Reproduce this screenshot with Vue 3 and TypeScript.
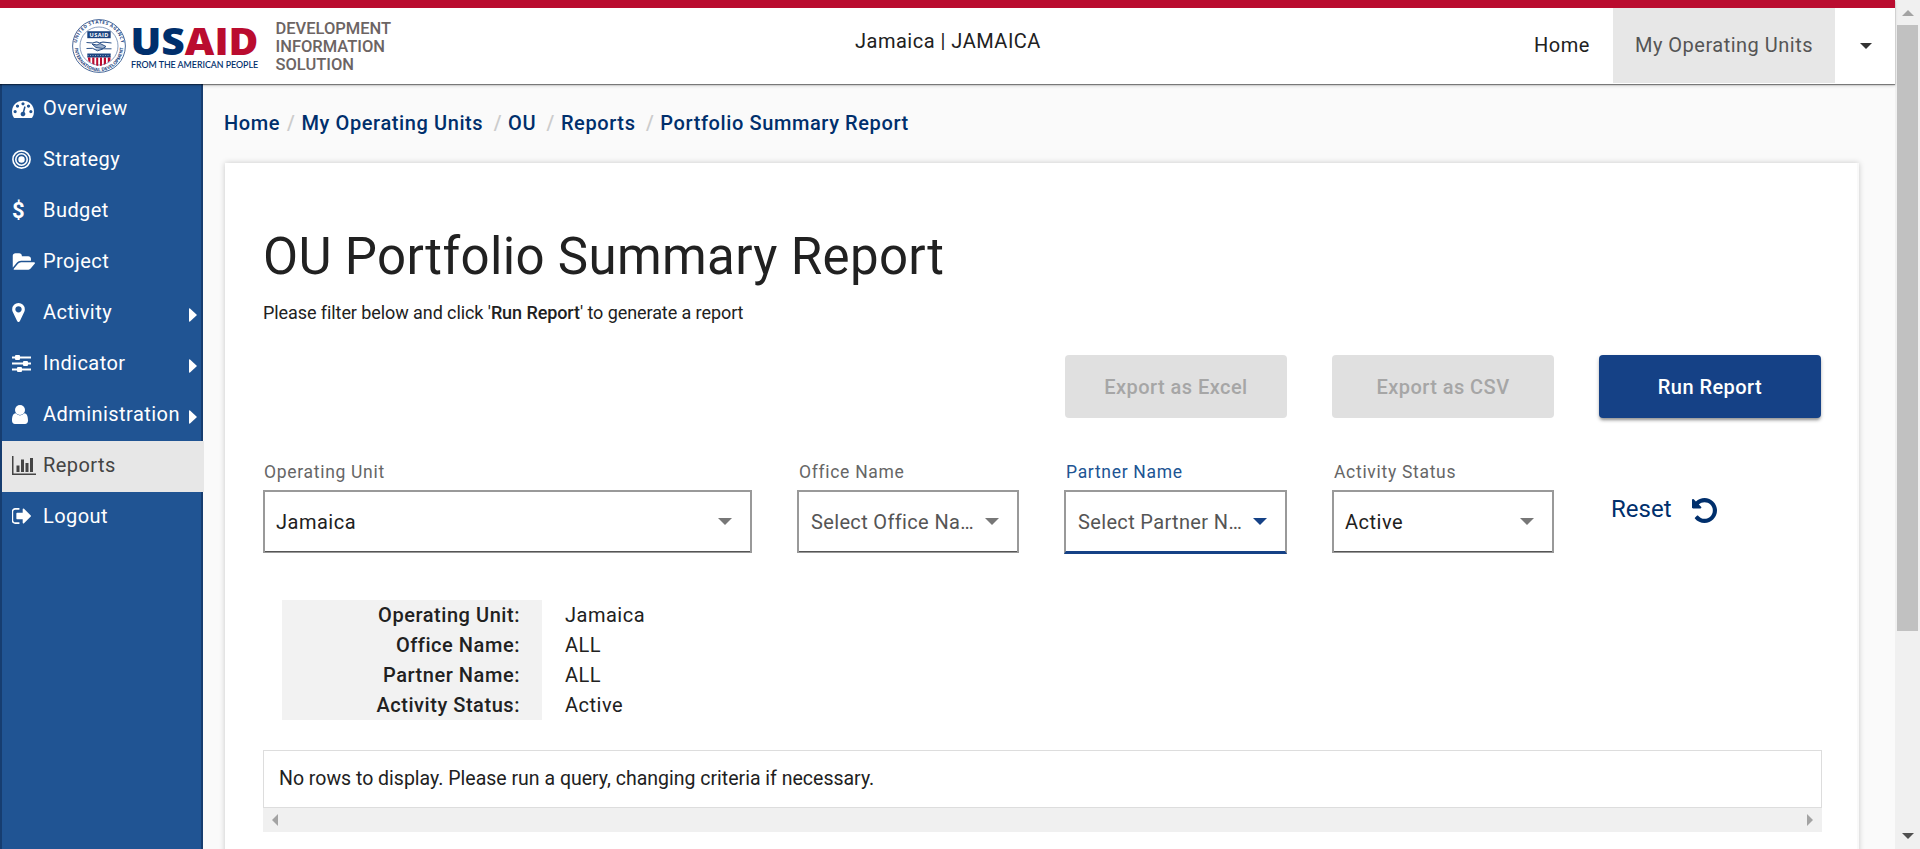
<script setup lang="ts">
interface NavItem {
  label: string
  icon: string
  arrow?: boolean
  active?: boolean
}
interface Field {
  label: string
  value: string
  kind?: string
  placeholder?: boolean
}

const nav: NavItem[] = [
  { label: 'Overview', icon: 'gauge' },
  { label: 'Strategy', icon: 'target' },
  { label: 'Budget', icon: 'dollar' },
  { label: 'Project', icon: 'folder' },
  { label: 'Activity', icon: 'marker', arrow: true },
  { label: 'Indicator', icon: 'sliders', arrow: true },
  { label: 'Administration', icon: 'user', arrow: true },
  { label: 'Reports', icon: 'chart', active: true },
  { label: 'Logout', icon: 'logout' },
]
const crumbs: string[] = ['Home', 'My Operating Units', 'OU', 'Reports', 'Portfolio Summary Report']
const fields: Field[] = [
  { label: 'Operating Unit', value: 'Jamaica', kind: 'wide' },
  { label: 'Office Name', value: 'Select Office Name', placeholder: true },
  { label: 'Partner Name', value: 'Select Partner Name', kind: 'focused', placeholder: true },
  { label: 'Activity Status', value: 'Active' },
]
const summary: [string, string][] = [
  ['Operating Unit:', 'Jamaica'],
  ['Office Name:', 'ALL'],
  ['Partner Name:', 'ALL'],
  ['Activity Status:', 'Active'],
]
</script>

<template>
  <div class="screen">
    <div class="page">
      <header class="header">
        <svg class="logo" width="204" height="60" viewBox="0 0 204 60">
          <defs>
            <path id="seal-top" d="M6.6 30a22.4 22.4 0 0 1 44.8 0" />
            <path id="seal-bottom" d="M4.8 31a24.2 24.2 0 0 0 48.4 0" />
          </defs>
          <circle cx="29" cy="30" r="26.4" fill="#fff" stroke="#49699a" stroke-width="1" />
          <circle cx="29" cy="30" r="19" fill="none" stroke="#6c87af" stroke-width=".8" />
          <text class="seal" textLength="64"><textPath href="#seal-top" startOffset="3">UNITED STATES AGENCY</textPath></text>
          <text class="seal" textLength="74"><textPath href="#seal-bottom" startOffset="1">INTERNATIONAL DEVELOPMENT</textPath></text>
          <rect x="17.3" y="15.2" width="23.4" height="7" fill="#1b4480" />
          <text x="29" y="20.8" class="seal-name" textLength="19">USAID</text>
          <path d="M16.5 26.5l6 .5 4-1.2 3 1 3.500-.8 8.500 1M16.500 32.500l6-.2 5 2.500 6-2 8 0M22 28l5 1 3-1.500 6 3-3 2-7-1z" fill="#9db1cc" stroke="#2d5288" stroke-width="1" />
          <path d="M17.300 37.500h23.400v4h-23.400z" fill="#1b4480" />
          <path d="M17.500 39.500h23" stroke="#a7b8d0" stroke-width=".8" stroke-dasharray="1 1.500" />
          <path d="M17.800 41.500h2.600v5l-2-1.500zM22.200 41.500h2.200v7.500l-2.200-1.500zM26.200 41.500h2v8.500l-2-.6zM30 41.500h2v8l-2 .5zM33.800 41.500h2.200v6l-2.200 1.600zM37.800 41.500h2.600v3l-2.600 2z" fill="#ba0c2f" />
          <text x="60.500" y="39.300" class="brand" textLength="128" lengthAdjust="spacingAndGlyphs">US<tspan fill="#ba0c2f">AID</tspan></text>
          <text x="61" y="51.900" class="tag" textLength="127" lengthAdjust="spacingAndGlyphs">FROM THE AMERICAN PEOPLE</text>
        </svg>
        <div class="product">DEVELOPMENT<br />INFORMATION<br />SOLUTION</div>
        <div class="context">Jamaica | JAMAICA</div>
        <nav class="topnav">
          <a class="home">Home</a>
          <a class="units">My Operating Units</a>
          <a class="more"><svg width="12" height="6" viewBox="0 0 12 6"><path d="M0 0h12l-6 6z" fill="#333" /></svg></a>
        </nav>
      </header>

      <div class="body">
        <aside class="sidebar">
          <a v-for="item in nav" :key="item.label" class="item" :class="{ active: item.active }">
            <span class="icon">
              <svg v-if="item.icon === 'gauge'" width="22" height="19" viewBox="0 128 1792 1536"><path fill="currentColor" d="M384 1152q0-53-37.500-90.500t-90.500-37.500-90.500 37.500-37.500 90.500 37.500 90.500 90.500 37.500 90.500-37.500 37.500-90.500zm192-448q0-53-37.500-90.500t-90.500-37.500-90.500 37.500-37.500 90.500 37.500 90.500 90.500 37.500 90.500-37.500 37.500-90.500zm428 481l101-382q6-26-7.500-48.500t-38.500-29.500-48 6.500-30 39.500l-101 382q-60 5-107 43.500t-63 98.500q-20 77 20 146t117 89 146-20 89-117q16-60-6-117t-72-91zm660-33q0-53-37.500-90.500t-90.500-37.500-90.500 37.500-37.500 90.500 37.500 90.500 90.500 37.500 90.500-37.500 37.500-90.500zm-640-640q0-53-37.500-90.500t-90.500-37.500-90.500 37.500-37.500 90.500 37.500 90.500 90.500 37.500 90.500-37.500 37.500-90.500zm448 192q0-53-37.500-90.500t-90.500-37.500-90.500 37.500-37.500 90.500 37.500 90.500 90.500 37.500 90.500-37.500 37.500-90.500zm320 448q0 261-141 483-19 29-54 29h-1402q-35 0-54-29-141-221-141-483 0-182 71-348t191-286 286-191 348-71 348 71 286 191 191 286 71 348z" /></svg>
              <svg v-else-if="item.icon === 'target'" width="19" height="19" viewBox="0 0 19 19" fill="none" stroke="currentColor"><circle cx="9.500" cy="9.500" r="8.600" stroke-width="1.600" /><circle cx="9.500" cy="9.500" r="5.700" stroke-width="1.600" /><circle cx="9.500" cy="9.500" r="3.200" fill="currentColor" stroke="none" /></svg>
              <b v-else-if="item.icon === 'dollar'" class="dollar">$</b>
              <svg v-else-if="item.icon === 'folder'" width="23" height="17" viewBox="0 128 1943 1408"><path fill="currentColor" d="M1943 952q0 31-31 66l-336 396q-43 51-120.500 86.500t-143.500 35.500h-1088q-34 0-60.500-13t-26.500-43q0-31 31-66l336-396q43-51 120.500-86.500t143.500-35.500h1088q34 0 60.500 13t26.500 43zm-343-344v160h-832q-94 0-197 47.500t-164 119.500l-337 396-5 6q0-4-.5-12.500t-.5-12.500v-960q0-92 66-158t158-66h320q92 0 158 66t66 158v32h544q92 0 158 66t66 158z" /></svg>
              <svg v-else-if="item.icon === 'marker'" width="13" height="19" viewBox="0 128 1024 1536"><path fill="currentColor" d="M768 640q0-106-75-181t-181-75-181 75-75 181 75 181 181 75 181-75 75-181zm256 0q0 109-33 179l-364 774q-16 33-47.500 52t-67.500 19-67.500-19-46.500-52l-365-774q-33-70-33-179 0-212 150-362t362-150 362 150 150 362z" /></svg>
              <svg v-else-if="item.icon === 'sliders'" width="19" height="17" viewBox="0 0 19 17" fill="currentColor"><path d="M0 1.500h19v2H0zM0 7.500h19v2H0zM0 13.500h19v2H0z" /><rect x="3" y="0" width="5" height="5" rx="1" /><rect x="11" y="6" width="5" height="5" rx="1" /><rect x="5" y="12" width="5" height="5" rx="1" /></svg>
              <svg v-else-if="item.icon === 'user'" width="16" height="19" viewBox="0 0 16 19" fill="currentColor"><circle cx="8" cy="5" r="5" /><path d="M3.600 8.300Q8 12.600 12.400 8.300C15 8.600 16 11.500 16 15.500 16 17.600 14.800 19 13 19H3C1.200 19 0 17.600 0 15.500 0 11.500 1 8.600 3.600 8.300z" /></svg>
              <svg v-else-if="item.icon === 'chart'" width="24" height="19" viewBox="0 0 24 19" fill="currentColor"><path d="M0 0h1.500v17.500H24V19H0zM4.500 9.500h3V16h-3zM9 3.500h3V16H9zM13.500 7h3v9h-3zM18 2h3v14h-3z" /></svg>
              <svg v-else width="19" height="16" viewBox="96 256 1536 1280"><path fill="currentColor" d="M704 1440q0 4 1 20t.5 26.500-3 23.500-10 19.500-20.500 6.500h-320q-119 0-203.500-84.500t-84.500-203.500v-704q0-119 84.500-203.500t203.500-84.500h320q13 0 22.500 9.500t9.500 22.500q0 4 1 20t.5 26.500-3 23.500-10 19.500-20.500 6.500h-320q-66 0-113 47t-47 113v704q0 66 47 113t113 47h312l11.500 1 11.500 3 8 5.500 7 9 2 13.500zm928-544q0 26-19 45l-544 544q-19 19-45 19t-45-19-19-45v-288h-448q-26 0-45-19t-19-45v-384q0-26 19-45t45-19h448v-288q0-26 19-45t45-19 45 19l544 544q19 19 19 45z" /></svg>
            </span>
            <span class="name">{{ item.label }}</span>
            <svg v-if="item.arrow" class="arrow" width="8" height="14" viewBox="0 0 8 14"><path d="M0 1q0-1 1-.5l7 6.500-7 6.500q-1 .5-1-.5z" fill="currentColor" /></svg>
          </a>
        </aside>

        <main class="main">
          <ol class="crumbs">
            <li v-for="crumb in crumbs" :key="crumb">{{ crumb }}</li>
          </ol>
          <section class="card">
            <h1>OU Portfolio Summary Report</h1>
            <p class="hint">Please filter below and click '<b>Run Report</b>' to generate a report</p>
            <div class="actions">
              <button disabled>Export as Excel</button>
              <button disabled>Export as CSV</button>
              <button class="primary">Run Report</button>
            </div>
            <div class="filters">
              <div v-for="field in fields" :key="field.label" class="field" :class="field.kind">
                <label>{{ field.label }}</label>
                <div class="select">
                  <span class="value" :class="{ placeholder: field.placeholder }">{{ field.value }}</span>
                  <svg width="14" height="7" viewBox="0 0 14 7"><path d="M0 0h14l-7 7z" fill="currentColor" /></svg>
                </div>
              </div>
              <a class="reset">
                Reset
                <svg width="25" height="25" viewBox="128 128 1536 1536"><path fill="currentColor" d="M1664 896q0 156-61 298t-164 245-245 164-298 61q-172 0-327-72.500t-264-204.500q-7-10-6.500-22.500t8.500-20.500l137-138q10-9 25-9 16 2 23 12 73 95 179 147t225 52q104 0 198.500-40.500t163.500-109.500 109.500-163.500 40.500-198.500-40.500-198.500-109.500-163.500-163.500-109.500-198.500-40.500q-98 0-188 35.500t-160 101.500l137 138q31 30 14 69-17 40-59 40h-448q-26 0-45-19t-19-45v-448q0-42 40-59 39-17 69 14l130 129q107-101 244.500-156.500t284.500-55.500q156 0 298 61t245 164 164 245 61 298z" /></svg>
              </a>
            </div>
            <dl class="summary">
              <template v-for="[key, value] in summary" :key="key">
                <dt>{{ key }}</dt>
                <dd>{{ value }}</dd>
              </template>
            </dl>
            <div class="grid">
              <div class="empty">No rows to display. Please run a query, changing criteria if necessary.</div>
              <div class="hscroll">
                <svg width="6" height="12" viewBox="0 0 6 12"><path d="M6 0v12l-6-6z" fill="#a3a3a3" /></svg>
                <svg width="6" height="12" viewBox="0 0 6 12"><path d="M0 0v12l6-6z" fill="#a3a3a3" /></svg>
              </div>
            </div>
          </section>
        </main>
      </div>
    </div>

    <div class="vscroll">
      <svg width="12" height="6" viewBox="0 0 12 6"><path d="M0 6h12l-6-6z" fill="#a3a3a3" /></svg>
      <div class="thumb"></div>
      <svg width="12" height="6" viewBox="0 0 12 6"><path d="M0 0h12l-6 6z" fill="#505050" /></svg>
    </div>
  </div>
</template>

<style>
html,
body {
  margin: 0;
  overflow: hidden;
}
</style>

<style scoped>
.screen,
.screen * {
  box-sizing: border-box;
}
.screen {
  display: flex;
  width: 1920px;
  height: 849px;
  overflow: hidden;
  background: #fafafa;
  color: #212121;
  font: 400 20px/30px Roboto, 'Liberation Sans', sans-serif;
}
svg {
  display: block;
  flex: none;
}
.page {
  display: flex;
  flex-direction: column;
  width: 1895px;
}
.header {
  display: flex;
  flex: none;
  position: relative;
  z-index: 1;
  height: 84px;
  border-top: 8px solid #ba0c2f;
  background: #fff;
  box-shadow: 0 1px 1px rgba(0, 0, 0, 0.45), 0 2px 3px rgba(0, 0, 0, 0.15);
}
.logo {
  margin: 8px 1.5px 0 70px;
}
.seal {
  font: 700 4.6px 'Open Sans', sans-serif;
  fill: #1b4480;
}
.seal-name {
  font: 700 5.6px 'Open Sans', sans-serif;
  fill: #fff;
  text-anchor: middle;
}
.brand {
  font: 800 37px 'Open Sans', sans-serif;
  fill: #002f6c;
}
.tag {
  font: 500 10px Lato, sans-serif;
  fill: #002f6c;
  stroke: #002f6c;
  stroke-width: 0.1px;
}
.product {
  width: 579.5px;
  padding-top: 12px;
  color: #6c6463;
  font-weight: 500;
  font-size: 16.5px;
  line-height: 18px;
}
.context {
  padding-top: 18px;
  letter-spacing: 0.5px;
}
.topnav {
  display: flex;
  margin-left: auto;
  height: 75px;
  line-height: 74px;
  letter-spacing: 0.5px;
}
.home {
  width: 79px;
}
.units {
  width: 222px;
  background: #e7e7e7;
  color: #555;
  text-align: center;
}
.more {
  display: flex;
  justify-content: center;
  width: 60px;
  padding: 35px 0 0 2px;
}
.body {
  display: flex;
  flex: 1;
}
.sidebar {
  flex: none;
  width: 203px;
  border-left: 2px solid #163d70;
  border-right: 2px solid #163d70;
  background: #205493;
}
.item {
  display: flex;
  align-items: center;
  height: 51px;
  padding-left: 10px;
  color: #fff;
  letter-spacing: 0.45px;
}
.item.active {
  width: 202px;
  background: #e7e7e7;
  color: #444;
}
.icon {
  width: 31px;
}
.icon svg {
  margin-top: -3px;
}
.name {
  margin-top: -3px;
  width: 146px;
}
.arrow {
  margin-top: 2px;
}
.dollar {
  display: block;
  margin-top: -1px;
  font-size: 22px;
  line-height: 50px;
}
.main {
  padding: 24px 0 0 22px;
}
.crumbs {
  display: flex;
  margin: 0 0 40px -1px;
  padding: 0;
  height: 15px;
  list-style: none;
  color: #002f6c;
  font-weight: 500;
  white-space: nowrap;
  letter-spacing: 0.6px;
}
.crumbs li + li::before {
  content: '/';
  color: #ccc;
  padding: 0 6px 0 10.4px;
}
.crumbs li:nth-child(2)::before {
  padding-left: 7px;
}
.card {
  width: 1634px;
  height: 720px;
  padding: 60px 35px 0 38px;
  border-right: 2px solid #f9f9f9;
  background: #fff;
  box-shadow: 0 0 6px rgba(0, 0, 0, 0.2);
}
h1 {
  margin: 0;
  font-weight: 400;
  font-size: 51px;
  line-height: 68px;
  letter-spacing: 0.35px;
}
.hint {
  margin: 7px 0 27px;
  font-size: 18px;
  letter-spacing: -0.08px;
}
.hint b {
  font-weight: 500;
}
.actions {
  display: flex;
  justify-content: flex-end;
  gap: 45px;
  margin-right: 1px;
}
button {
  width: 222px;
  height: 63px;
  padding: 0;
  border: 0;
  border-radius: 4px;
  background: #e0e0e0;
  color: #a6a6a6;
  font: 500 20px Roboto, sans-serif;
  letter-spacing: 0.45px;
}
.primary {
  background: #154186;
  color: #fff;
  box-shadow: 0 3px 3px -1px rgba(0, 0, 0, 0.3), 0 2px 4px rgba(0, 0, 0, 0.2);
}
.filters {
  display: flex;
  gap: 45px;
  height: 182px;
  padding-top: 39px;
}
.field {
  width: 222px;
  flex: none;
}
.field.wide {
  width: 489px;
}
.field.focused {
  width: 223px;
}
label {
  display: block;
  height: 33px;
  padding-left: 2px;
  color: #666;
  font-size: 17.5px;
  letter-spacing: 0.7px;
}
.wide label {
  padding-left: 1px;
}
.select {
  display: flex;
  align-items: center;
  height: 63px;
  padding: 0 18px 0 11px;
  border: 2px solid #999;
  box-shadow: inset 0 -1px #555;
  border-bottom-width: 1px;
  border-bottom-color: #999;
  color: #777;
}
.select svg {
  margin-top: -1px;
}
.value {
  flex: 1;
  min-width: 0;
  margin-right: 4px;
  overflow: hidden;
  white-space: nowrap;
  text-overflow: ellipsis;
  color: #212121;
  letter-spacing: 0.5px;
}
.value.placeholder {
  padding-left: 1px;
  color: #555;
  letter-spacing: 0.35px;
}
.focused label {
  color: #205493;
}
.focused .select {
  color: #154186;
  height: 64px;
  border-bottom: 3px solid #154186;
  box-shadow: none;
}
.reset {
  display: flex;
  gap: 21px;
  margin-left: 12px;
  padding-top: 37px;
  color: #002f6c;
  font-size: 24px;
}
.reset svg {
  margin-top: 4px;
}
.summary {
  display: grid;
  grid-template-columns: 260px 400px;
  margin: 0 0 30px 19px;
}
dt {
  padding-right: 22px;
  background: #f2f2f2;
  text-align: right;
  font-weight: 500;
  letter-spacing: 0.55px;
}
dd {
  margin: 0 0 0 23px;
  letter-spacing: 0.5px;
}
.grid {
  width: 1559px;
}
.empty {
  height: 58px;
  padding-left: 15px;
  border: 1px solid #ddd;
  font-size: 19.5px;
  line-height: 55px;
}
.hscroll {
  display: flex;
  justify-content: space-between;
  align-items: center;
  height: 24px;
  padding: 0 9px;
  background: #f0f0f0;
}
.vscroll {
  display: flex;
  flex-direction: column;
  align-items: center;
  width: 25px;
  height: 849px;
  padding: 10px 0;
  background: #f0f0f0;
}
.thumb {
  width: 21px;
  height: 606px;
  margin: 9px 0 auto;
  background: #c1c1c1;
}
</style>
